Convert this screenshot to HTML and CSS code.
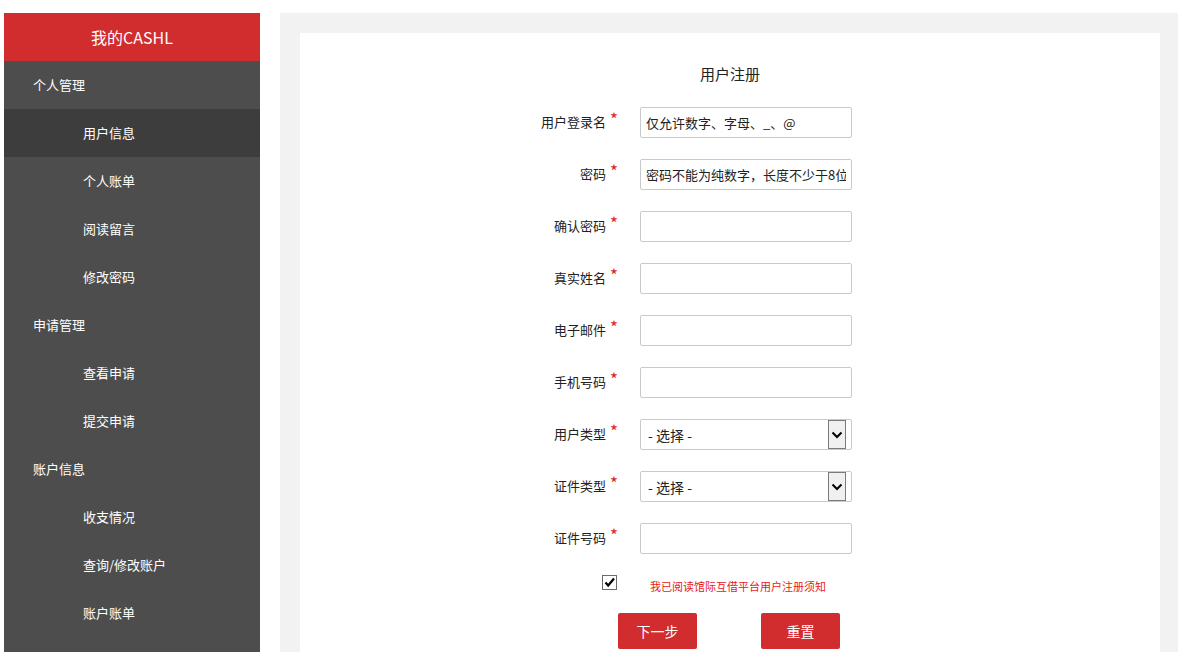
FILE: index.html
```html
<!DOCTYPE html>
<html>
<head>
  <title>用户注册 - 我的CASHL</title>
  <meta charset="UTF-8">
  <link rel="stylesheet" href="styles.css">
</head>
<body>
  <div class="page">
    <div class="sidebar">
      <div class="sidebar-title">我的CASHL</div>
      <div class="menu-group">个人管理</div>
      <a class="menu-item active">用户信息</a>
      <a class="menu-item">个人账单</a>
      <a class="menu-item">阅读留言</a>
      <a class="menu-item">修改密码</a>
      <div class="menu-group">申请管理</div>
      <a class="menu-item">查看申请</a>
      <a class="menu-item">提交申请</a>
      <div class="menu-group">账户信息</div>
      <a class="menu-item">收支情况</a>
      <a class="menu-item">查询/修改账户</a>
      <a class="menu-item">账户账单</a>
    </div>

    <div class="main">
      <div class="panel">
        <h2 class="form-title">用户注册</h2>

        <div class="form-row">
          <label>用户登录名<span class="req">*</span></label>
          <input type="text" placeholder="仅允许数字、字母、_、@">
        </div>
        <div class="form-row">
          <label>密码<span class="req">*</span></label>
          <input type="text" placeholder="密码不能为纯数字，长度不少于8位">
        </div>
        <div class="form-row">
          <label>确认密码<span class="req">*</span></label>
          <input type="text">
        </div>
        <div class="form-row">
          <label>真实姓名<span class="req">*</span></label>
          <input type="text">
        </div>
        <div class="form-row">
          <label>电子邮件<span class="req">*</span></label>
          <input type="text">
        </div>
        <div class="form-row">
          <label>手机号码<span class="req">*</span></label>
          <input type="text">
        </div>
        <div class="form-row">
          <label>用户类型<span class="req">*</span></label>
          <div class="select-wrap">
            <select><option>- 选择 -</option></select>
            <span class="select-btn">
              <svg width="12" height="8" viewBox="0 0 12 8"><path d="M1.5 1.5 L6 6 L10.5 1.5" fill="none" stroke="#000" stroke-width="2"/></svg>
            </span>
          </div>
        </div>
        <div class="form-row">
          <label>证件类型<span class="req">*</span></label>
          <div class="select-wrap">
            <select><option>- 选择 -</option></select>
            <span class="select-btn">
              <svg width="12" height="8" viewBox="0 0 12 8"><path d="M1.5 1.5 L6 6 L10.5 1.5" fill="none" stroke="#000" stroke-width="2"/></svg>
            </span>
          </div>
        </div>
        <div class="form-row">
          <label>证件号码<span class="req">*</span></label>
          <input type="text">
        </div>

        <div class="agree-row">
          <span class="check-box">
            <svg width="13" height="13" viewBox="0 0 13 13"><path d="M2.5 6.5 L5.2 9.5 L11 2.5" fill="none" stroke="#000" stroke-width="2.2"/></svg>
          </span>
          <span class="agree-text">我已阅读馆际互借平台用户注册须知</span>
        </div>

        <div class="button-row">
          <button class="btn">下一步</button>
          <button class="btn">重置</button>
        </div>
      </div>
    </div>
  </div>
</body>
</html>
```

FILE: styles.css
```css
body {
  margin: 0;
  padding: 0;
  font-family: "Noto Sans CJK SC", "Liberation Sans", sans-serif;
  background-color: #ffffff;
  color: #333333;
  font-size: 13px;
}

.page {
  display: flex;
  padding: 13px 0 0 4px;
  height: 639px;
  overflow: hidden;
  gap: 20px;
}

.sidebar {
  width: 256px;
  flex-shrink: 0;
  background-color: #4d4d4d;
  color: #ffffff;
}

.sidebar-title {
  height: 48px;
  line-height: 48px;
  background-color: #d12c2e;
  text-align: center;
  font-size: 16px;
}

.menu-group,
.menu-item {
  display: block;
  height: 48px;
  line-height: 48px;
  font-size: 13px;
}

.menu-group {
  padding-left: 29px;
}

.menu-item {
  padding-left: 79px;
  cursor: pointer;
}

.menu-item.active {
  background-color: #3d3d3d;
}

.main {
  flex-grow: 1;
  background-color: #f2f2f2;
  padding: 20px 18px 0 20px;
}

.panel {
  background-color: #ffffff;
  height: 100%;
  padding-top: 30px;
  box-sizing: border-box;
}

.form-title {
  margin: 0 0 22px 0;
  font-size: 15px;
  font-weight: normal;
  text-align: center;
  line-height: 22px;
  color: #222222;
}

.form-row {
  display: flex;
  align-items: center;
  margin-bottom: 21px;
}

.form-row label {
  width: 318px;
  text-align: right;
  color: #222222;
  font-size: 13px;
  line-height: 16px;
  margin-top: -3px;
}

.req {
  color: #e02424;
  font-size: 17px;
  margin-left: 4px;
  position: relative;
  top: -1px;
}

.form-row input[type="text"],
.select-wrap {
  margin-left: 22px;
  width: 212px;
  height: 31px;
  box-sizing: border-box;
}

.form-row input[type="text"] {
  border: 1px solid #c9c9c9;
  border-radius: 2px;
  padding: 0 5px;
  font-family: inherit;
  font-size: 13px;
  color: #222222;
}

.form-row input::placeholder {
  color: #222222;
}

.select-wrap {
  position: relative;
}

.select-wrap select {
  width: 100%;
  height: 100%;
  border: 1px solid #c9c9c9;
  border-radius: 2px;
  background-color: #ffffff;
  padding: 0 7px;
  font-family: inherit;
  font-size: 14px;
  color: #222222;
  appearance: none;
  -webkit-appearance: none;
}

.select-btn {
  position: absolute;
  top: 1px;
  right: 6px;
  width: 18px;
  height: 29px;
  box-sizing: border-box;
  border: 1px solid #7a7a7a;
  background-color: #f0f0f0;
  display: flex;
  align-items: center;
  justify-content: center;
  pointer-events: none;
}

.agree-row {
  display: flex;
  align-items: center;
  padding-left: 302px;
  margin-top: -2px;
  height: 18px;
}

.check-box {
  width: 15px;
  height: 15px;
  box-sizing: border-box;
  border: 1px solid #6b6b6b;
  display: flex;
  align-items: center;
  justify-content: center;
  background-color: #ffffff;
}

.agree-text {
  margin-left: 33px;
  margin-top: 7px;
  color: #e8201c;
  font-size: 11px;
}

.button-row {
  display: flex;
  padding-left: 318px;
  gap: 64px;
  margin-top: 22px;
}

.btn {
  width: 79px;
  height: 36px;
  border: none;
  border-radius: 2px;
  background-color: #d12c2e;
  color: #ffffff;
  font-family: inherit;
  font-size: 14px;
  cursor: pointer;
}
```
